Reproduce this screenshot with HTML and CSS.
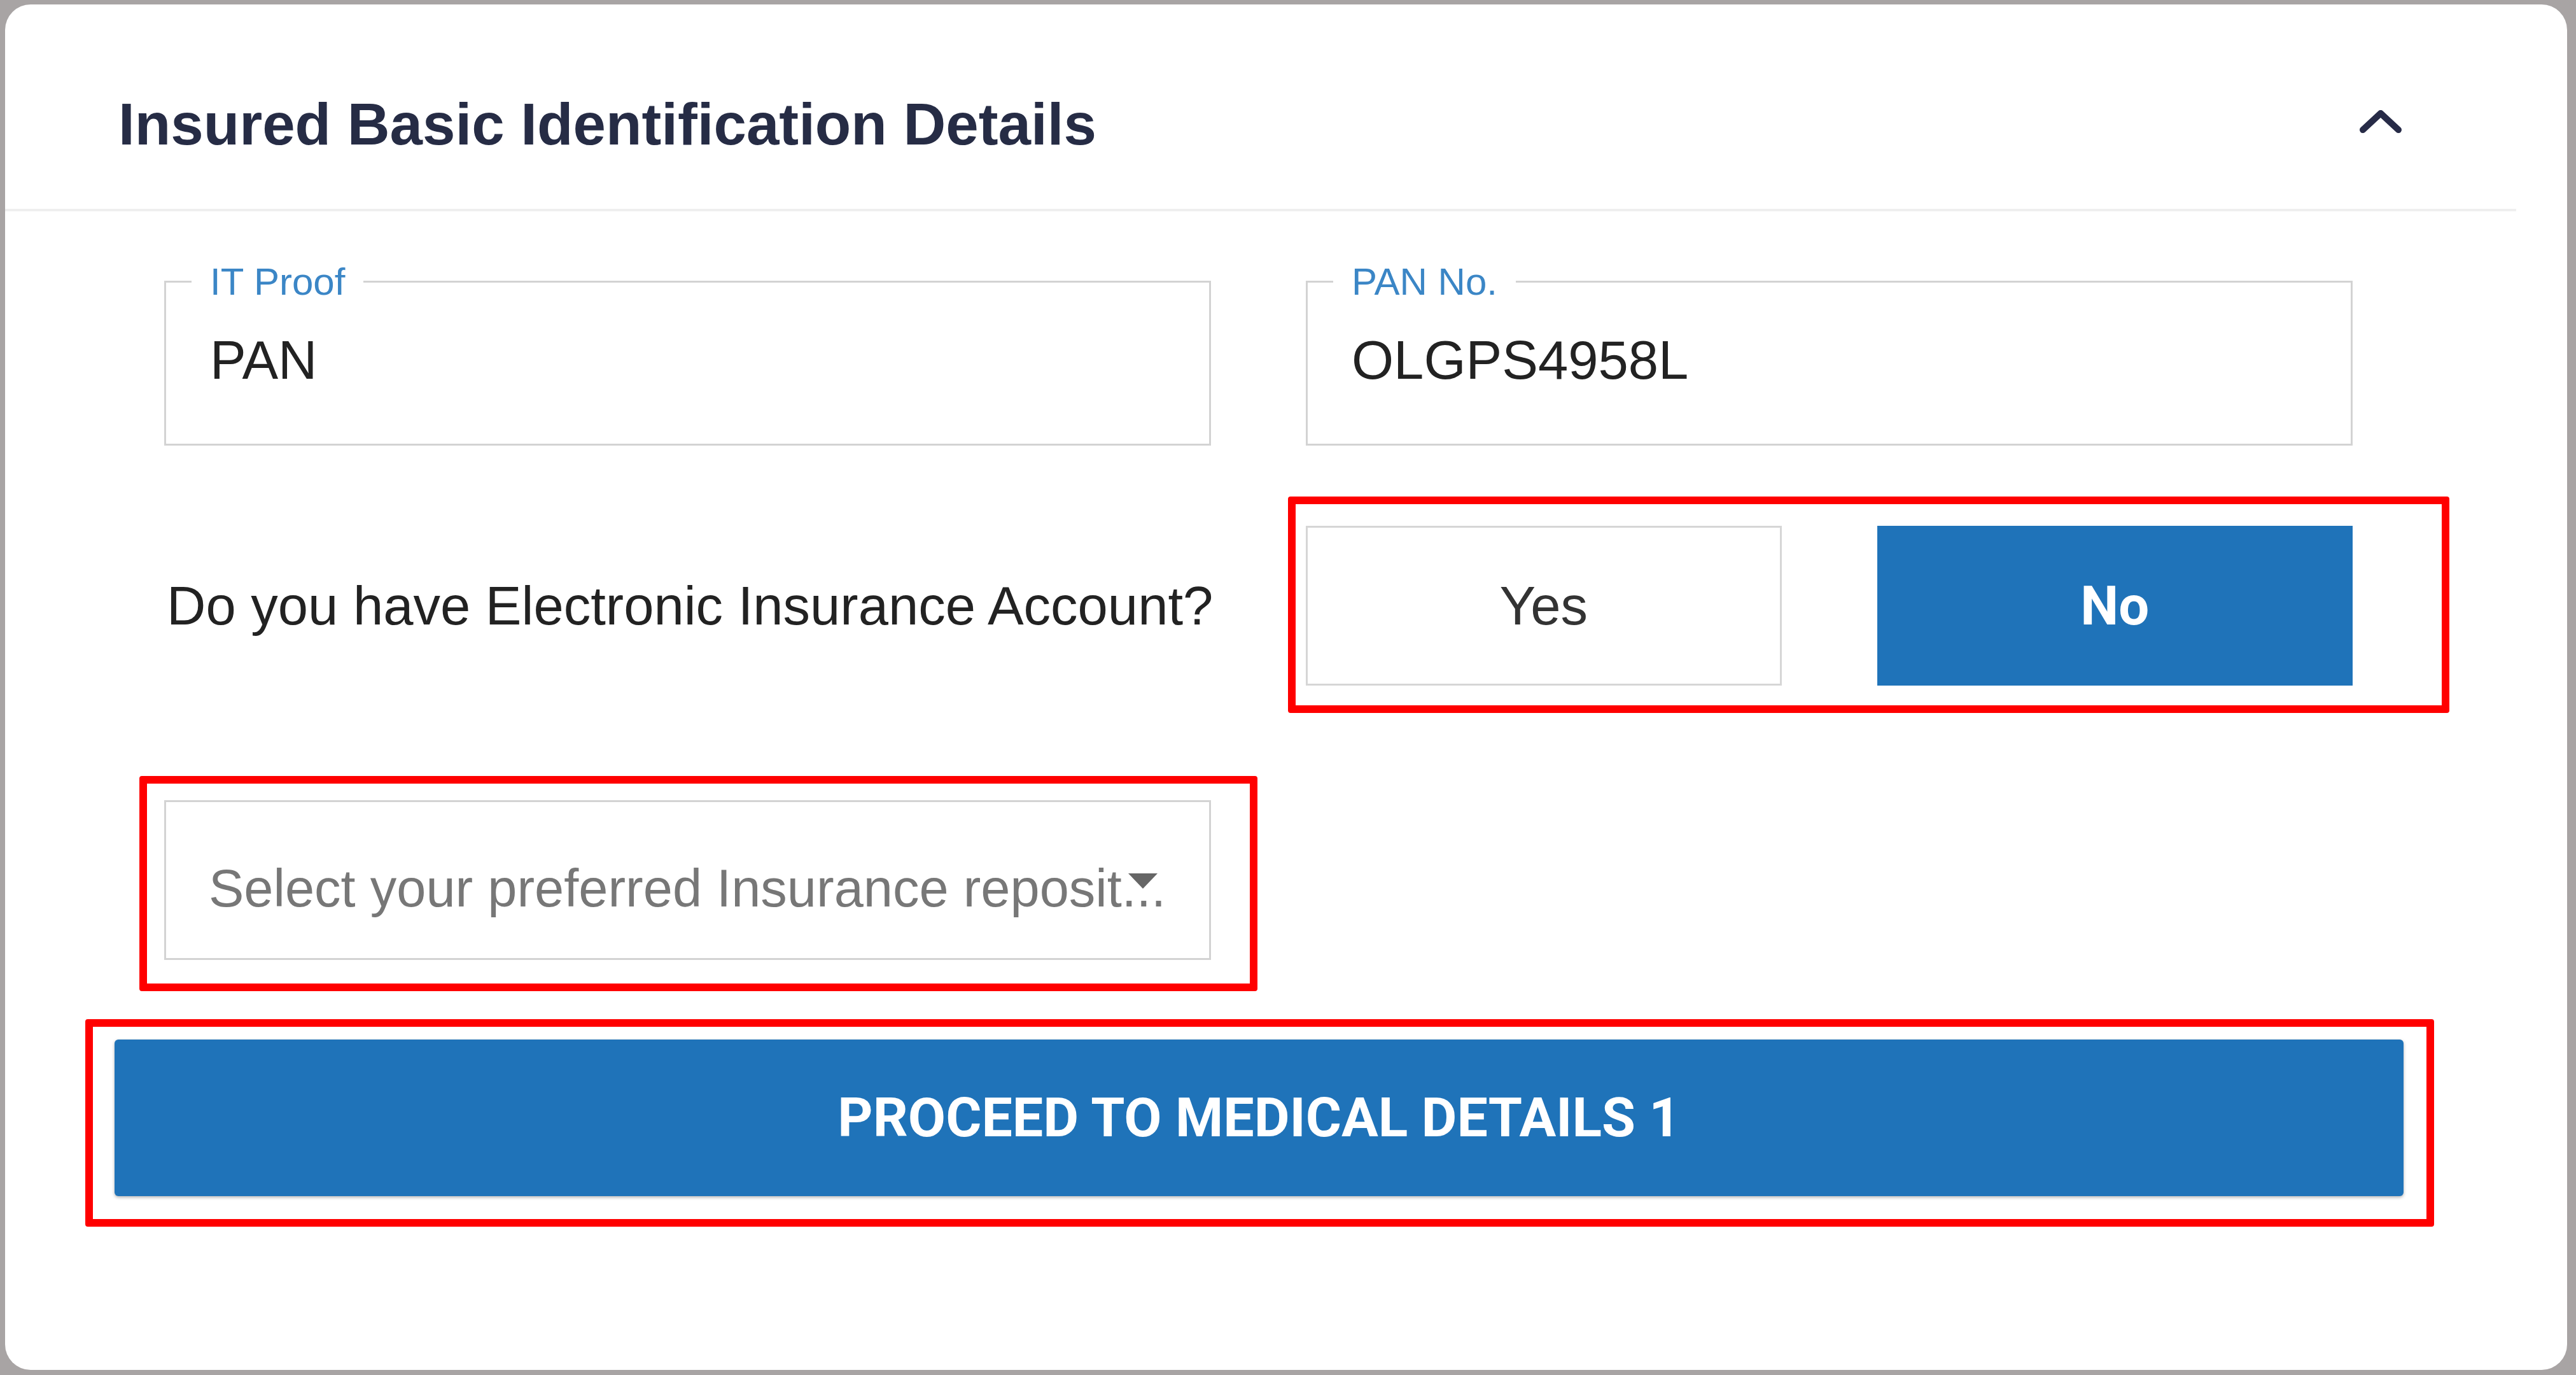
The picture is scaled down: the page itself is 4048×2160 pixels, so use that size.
FILE: index.html
```html
<!DOCTYPE html>
<html lang="en">
<head>
<meta charset="utf-8">
<title>Insured Basic Identification Details</title>
<link rel="stylesheet" href="styles.css">
</head>
<body>
<div class="frame">
  <div class="card">
    <div class="card-header">
      <h2 class="card-title">Insured Basic Identification Details</h2>
      <svg class="chevron" width="66" height="36" viewBox="0 0 66 36" aria-hidden="true">
        <polyline points="5,31 33,5 61,31" fill="none" stroke="#272b47" stroke-width="10" stroke-linecap="round" stroke-linejoin="round"/>
      </svg>
    </div>
    <div class="card-body">
      <div class="form-grid">
        <fieldset class="field">
          <legend class="field-label">IT Proof</legend>
          <div class="field-value">PAN</div>
        </fieldset>
        <fieldset class="field">
          <legend class="field-label">PAN No.</legend>
          <div class="field-value">OLGPS4958L</div>
        </fieldset>

        <div class="question">Do you have Electronic Insurance Account?</div>
        <div class="choice-wrap">
          <div class="choices">
            <div class="choice">Yes</div>
            <div class="choice choice-active">No</div>
          </div>
          <div class="mark mark-choices"></div>
        </div>

        <div class="select-wrap">
          <div class="select">
            <span class="select-text">Select your preferred Insurance reposit...</span>
            <span class="select-arrow"></span>
          </div>
          <div class="mark mark-select"></div>
        </div>
      </div>

      <div class="proceed-wrap">
        <button class="proceed">PROCEED TO MEDICAL DETAILS 1</button>
        <div class="mark mark-proceed"></div>
      </div>
    </div>
  </div>
</div>
</body>
</html>
```
FILE: styles.css
```css
* { box-sizing: border-box; }

html, body {
  margin: 0;
  padding: 0;
  background: #a8a4a4;
}

.frame {
  margin: 7px 14px 8px 8px;
  height: 2145px;
  background: #ffffff;
  border-radius: 40px;
  overflow: hidden;
  font-family: "Liberation Sans", Arial, sans-serif;
}

.card {
  width: 3946px;
}

.card-header {
  display: flex;
  align-items: center;
  justify-content: space-between;
  padding: 135px 180px 80px 178px;
  border-bottom: 4px solid #efefef;
}

.card-title {
  margin: 0;
  font-family: "Liberation Sans", Arial, sans-serif;
  font-weight: 700;
  font-size: 92.5px;
  line-height: 106px;
  color: #262c45;
}

.chevron {
  display: block;
  margin-top: -8px;
}

.card-body {
  padding: 76px 177px 0 172px;
}

.form-grid {
  display: grid;
  grid-template-columns: 1645px 1645px;
  column-gap: 149px;
  padding: 0 80px 0 78px;
}

.field {
  margin: 0;
  min-width: 0;
  border: 3px solid #d3d3d3;
  padding: 0 0 81px 40px;
}

.field-label {
  padding: 0 29px;
  font-size: 60px;
  line-height: 69px;
  color: #3b86c6;
}

.field-value {
  padding: 39px 0 0 29px;
  font-size: 85px;
  line-height: 100px;
  color: #222222;
}

.question {
  margin-top: 126px;
  display: flex;
  align-items: center;
  padding-left: 4px;
  white-space: nowrap;
  font-size: 85px;
  line-height: 100px;
  color: #222222;
}

.choice-wrap {
  position: relative;
  margin-top: 126px;
}

.choices {
  display: grid;
  grid-template-columns: 1fr 1fr;
  column-gap: 150px;
  height: 251px;
}

.choice {
  display: flex;
  align-items: center;
  justify-content: center;
  border: 3px solid #d6d6d6;
  font-size: 85px;
  color: #333333;
}

.choice-active {
  border-color: #1f73b9;
  background: #1f73b9;
  color: #ffffff;
  font-family: Roboto, "Liberation Sans", sans-serif;
  font-weight: 700;
}

.select-wrap {
  position: relative;
  margin-top: 180px;
}

.select {
  position: relative;
  height: 251px;
  border: 3px solid #d3d3d3;
  padding: 86px 0 0 67px;
}

.select-text {
  display: block;
  font-size: 83px;
  line-height: 100px;
  color: #777777;
  white-space: nowrap;
}

.select-arrow {
  position: absolute;
  right: 81px;
  top: 112px;
  width: 0;
  height: 0;
  border-left: 23px solid transparent;
  border-right: 23px solid transparent;
  border-top: 24px solid #666666;
}

.proceed-wrap {
  position: relative;
  margin-top: 125px;
}

.proceed {
  display: block;
  width: 100%;
  height: 246px;
  border: none;
  border-radius: 6px;
  background: #1f73b9;
  box-shadow: 0 2px 5px rgba(0, 0, 0, 0.3);
  color: #ffffff;
  font-family: Roboto, "Liberation Sans", sans-serif;
  font-weight: 700;
  font-size: 86px;
  line-height: 100px;
  padding: 0;
}

.mark {
  position: absolute;
  border: 12px solid #ff0000;
  border-radius: 4px;
  pointer-events: none;
}

.mark-choices {
  left: -28px;
  right: -152px;
  top: -46px;
  bottom: -43px;
}

.mark-select {
  left: -39px;
  right: -73px;
  top: -38px;
  bottom: -49px;
}

.mark-proceed {
  left: -46px;
  right: -48px;
  top: -32px;
  bottom: -48px;
}
```
